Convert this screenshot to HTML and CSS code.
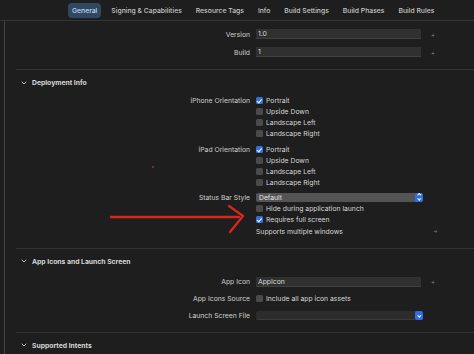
FILE: index.html
```html
<!DOCTYPE html>
<html lang="en">
<head>
  <meta charset="UTF-8">
  <title>General</title>
  <link rel="stylesheet" href="styles.css">
</head>
<body>
  <nav class="tabs">
    <span class="tab active">General</span>
    <span class="tab">Signing &amp; Capabilities</span>
    <span class="tab">Resource Tags</span>
    <span class="tab">Info</span>
    <span class="tab">Build Settings</span>
    <span class="tab">Build Phases</span>
    <span class="tab">Build Rules</span>
  </nav>

  <div class="main">
    <div class="group top-group">
      <div class="row tall">
        <span class="label">Version</span>
        <span class="field">1.0</span>
        <span class="extra">+</span>
      </div>
      <div class="row tall">
        <span class="label">Build</span>
        <span class="field">1</span>
        <span class="extra">+</span>
      </div>
    </div>

    <div class="sep"></div>
    <div class="section-head first">
      <svg class="chev" width="6" height="4" viewBox="0 0 6 4"><path d="M0.7 0.8 L3 3 L5.3 0.8" fill="none" stroke="#bdbdbd" stroke-width="1"/></svg>
      <span>Deployment Info</span>
    </div>

    <div class="group">
      <div class="row">
        <span class="label">iPhone Orientation</span>
        <span class="check on"></span><span class="value">Portrait</span>
      </div>
      <div class="row"><span class="label"></span><span class="check"></span><span class="value">Upside Down</span></div>
      <div class="row"><span class="label"></span><span class="check"></span><span class="value">Landscape Left</span></div>
      <div class="row"><span class="label"></span><span class="check"></span><span class="value">Landscape Right</span></div>

      <div class="row gap-top">
        <span class="label">iPad Orientation</span>
        <span class="check on"></span><span class="value">Portrait</span>
      </div>
      <div class="row"><span class="label"></span><span class="check"></span><span class="value">Upside Down</span></div>
      <div class="row"><span class="label"></span><span class="check"></span><span class="value">Landscape Left</span></div>
      <div class="row"><span class="label"></span><span class="check"></span><span class="value">Landscape Right</span></div>

      <div class="row popup-row">
        <span class="label">Status Bar Style</span>
        <span class="popup light">Default<span class="stepper both"></span></span>
      </div>
      <div class="row"><span class="label"></span><span class="check"></span><span class="value">Hide during application launch</span></div>
      <div class="row"><span class="label"></span><span class="check on"></span><span class="value">Requires full screen</span></div>
      <div class="row last">
        <span class="label"></span>
        <span class="value wide">Supports multiple windows</span>
        <span class="extra arrow">&rarr;</span>
      </div>
    </div>

    <div class="sep sep-b"></div>
    <div class="section-head">
      <svg class="chev" width="6" height="4" viewBox="0 0 6 4"><path d="M0.7 0.8 L3 3 L5.3 0.8" fill="none" stroke="#bdbdbd" stroke-width="1"/></svg>
      <span>App Icons and Launch Screen</span>
    </div>

    <div class="group icons-group">
      <div class="row mid">
        <span class="label">App Icon</span>
        <span class="field">AppIcon</span>
        <span class="extra">+</span>
      </div>
      <div class="row mid">
        <span class="label">App Icons Source</span>
        <span class="check"></span><span class="value">Include all app icon assets</span>
      </div>
      <div class="row mid">
        <span class="label">Launch Screen File</span>
        <span class="popup dark"><span class="stepper down"></span></span>
      </div>
    </div>

    <div class="sep sep-c"></div>
    <div class="section-head">
      <svg class="chev" width="6" height="4" viewBox="0 0 6 4"><path d="M0.7 0.8 L3 3 L5.3 0.8" fill="none" stroke="#bdbdbd" stroke-width="1"/></svg>
      <span>Supported Intents</span>
    </div>
  </div>

  <!-- annotation drawn over the screenshot -->
  <svg class="annot" width="474" height="354" viewBox="0 0 474 354">
    <path d="M111 217 L239 217" stroke="#d9261f" stroke-width="2.3" stroke-linecap="round" fill="none"/>
    <path d="M229 206 L243 216 L230 232" stroke="#d9261f" stroke-width="2.3" stroke-linecap="round" stroke-linejoin="round" fill="none"/>
    <circle cx="153" cy="167" r="1" fill="#c8241e"/>
  </svg>
</body>
</html>
```

FILE: styles.css
```css
body {
  margin: 0;
  background-color: #1e1e1e;
  font-family: Inter, "Noto Sans", sans-serif;
  font-size: 6.8px;
  color: #d2d2d2;
  width: 474px;
  height: 354px;
  overflow: hidden;
  position: relative;
}

.tabs {
  display: flex;
  align-items: center;
  gap: 6px;
  height: 20px;
  padding-left: 68px;
  border-bottom: 1px solid #353535;
  box-sizing: content-box;
}

.tab {
  padding: 3px 4px;
  border-radius: 4px;
  font-weight: 500;
  color: #c6c6c6;
  white-space: nowrap;
}

.tab.active {
  background-color: #2f4963;
  color: #c3d8f2;
}

.main {
  margin-left: 4px;
  border-left: 1px solid #444;
  height: 333px;
}

.top-group {
  padding-top: 4px;
  padding-bottom: 8px;
}

.row {
  display: flex;
  align-items: center;
  height: 11px;
}

.row.tall {
  height: 18px;
}

.row.mid {
  height: 17px;
}

.row.gap-top {
  margin-top: 5px;
}

.row.popup-row {
  margin-top: 3px;
  height: 12px;
}

.row.last {
  height: 12px;
}

.label {
  width: 245px;
  margin-right: 6px;
  text-align: right;
  white-space: nowrap;
  color: #cfcfcf;
}

.value {
  white-space: nowrap;
  color: #d6d6d6;
}

.value.wide {
  width: 167px;
}

.field {
  width: 165px;
  height: 10px;
  line-height: 10px;
  padding-left: 2px;
  background-color: #303030;
  border-bottom: 1px solid #404040;
  box-sizing: border-box;
  color: #dcdcdc;
}

.extra {
  margin-left: 10px;
  color: #8a8a8a;
  font-size: 6px;
}

.extra.arrow {
  margin-left: 10px;
  font-size: 5px;
  color: #7a7a7a;
}

.check {
  width: 7px;
  height: 7px;
  border-radius: 1.5px;
  background-color: #4a4a4a;
  margin-right: 3px;
  position: relative;
}

.check.on {
  background-color: #2f6fde;
}

.check.on::after {
  content: "";
  position: absolute;
  left: 2.2px;
  top: 0.6px;
  width: 1.6px;
  height: 3.6px;
  border: solid #fff;
  border-width: 0 1px 1px 0;
  transform: rotate(40deg);
}

.popup {
  width: 167px;
  height: 9px;
  border-radius: 2px;
  display: flex;
  align-items: center;
  padding-left: 3px;
  box-sizing: border-box;
  position: relative;
  color: #e2e2e2;
}

.popup.light {
  background-color: #545454;
}

.popup.dark {
  background-color: #2c2c2c;
  border-bottom: 1px solid #3a3a3a;
}

.stepper {
  position: absolute;
  right: 0;
  top: 0;
  width: 8px;
  height: 9px;
  border-radius: 2px;
  background-color: #2d6ee0;
}

.stepper::before,
.stepper.both::after {
  content: "";
  position: absolute;
  left: 2.8px;
  width: 1.6px;
  height: 1.6px;
  border: solid #fff;
  border-width: 0 0.8px 0.8px 0;
}

.stepper.down::before {
  top: 2.6px;
  transform: rotate(45deg);
}

.stepper.both::before {
  top: 1.2px;
  transform: rotate(-135deg);
}

.stepper.both::after {
  top: 4.4px;
  transform: rotate(45deg);
}

.sep {
  margin-left: 11px;
  border-top: 1px solid #333;
}

.sep-b {
  margin-top: 11px;
}

.sep-c {
  margin-top: 8px;
}

.section-head {
  display: flex;
  align-items: center;
  height: 24px;
  padding-left: 16px;
  gap: 5px;
  font-weight: 700;
  color: #d8d8d8;
}

.section-head.first {
  height: 25px;
}

.annot {
  position: absolute;
  left: 0;
  top: 0;
  pointer-events: none;
}
```
